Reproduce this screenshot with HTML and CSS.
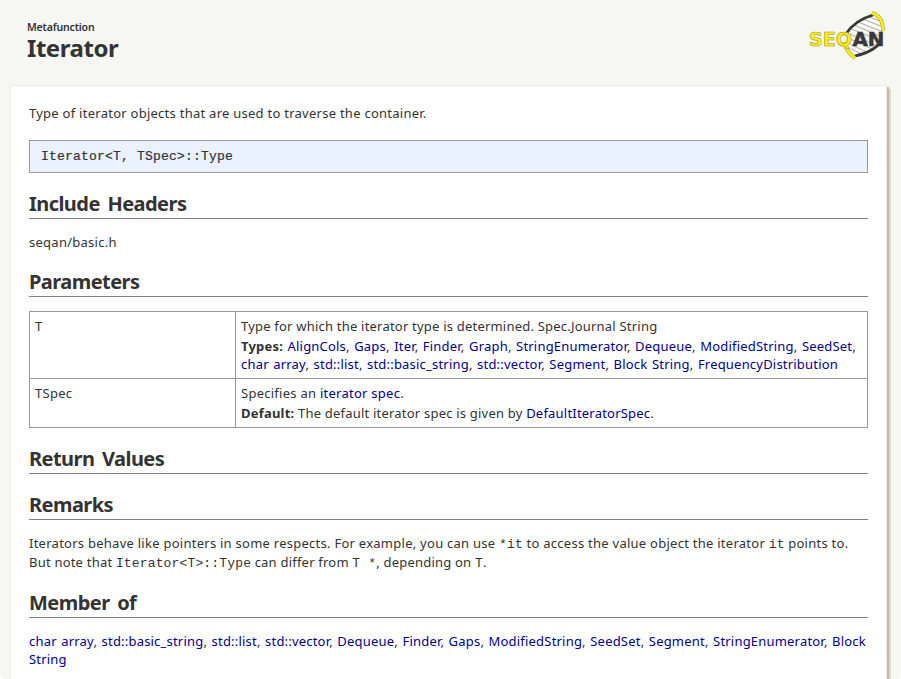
FILE: index.html
```html
<!DOCTYPE html>
<html lang="en">
<head>
<meta charset="utf-8">
<title>Metafunction Iterator</title>
<link rel="stylesheet" href="styles.css">
</head>
<body>
<div class="window">
<header class="page-header">
  <div>
    <div class="kind">Metafunction</div>
    <h1>Iterator</h1>
  </div>
  <svg class="logo" width="80" height="52" viewBox="0 0 80 52" role="img" aria-label="SeqAn">
    <path d="M39 27C43 15 52 8 66 6L75 20C75 31 67 40 46 45Z" fill="#f8f8f6"/>
    <path d="M61 7L75 12M55 9L75 17M50 12L75 22M46 15L74 27M43 19L74 31M42 24L70 36M42 29L66 40M42 34L60 43M43 39L54 44" stroke="#aaa" fill="none"/>
    <path d="M38 24C43 16 51 9 65 5" fill="none" stroke="#3b3639" stroke-width="2.800"/>
    <path d="M73 31C69 38 60 43 47 46" fill="none" stroke="#3b3639" stroke-width="2.800"/>
    <path d="M64 3C72 5 75 11 75 21" fill="none" stroke="#998f48" stroke-width="3.600"/>
    <path d="M64 3C72 5 75 11 75 21" fill="none" stroke="#fff200" stroke-width="2.800"/>
    <path d="M36 32C38 40 41 44 47 48" fill="none" stroke="#998f48" stroke-width="3.600"/>
    <path d="M36 32C38 40 41 44 47 48" fill="none" stroke="#fff200" stroke-width="2.800"/>
    <text class="logo-seq" x="1" y="35.500" textLength="43" lengthAdjust="spacingAndGlyphs">SEQ</text>
    <text class="logo-an" x="44.500" y="35.500" textLength="32" lengthAdjust="spacingAndGlyphs">AN</text>
  </svg>
</header>
<main class="card">
  <p class="intro">Type of iterator objects that are used to traverse the container.</p>
  <pre>Iterator&lt;T, TSpec&gt;::Type</pre>

  <h2>Include Headers</h2>
  <p>seqan/basic.h</p>

  <h2>Parameters</h2>
  <table>
    <tr>
      <td class="name">T</td>
      <td>
        <div class="prose">Type for which the iterator type is determined. Spec.Journal String</div>
        <div class="detail links"><b>Types:</b> <a>AlignCols</a>, <a>Gaps</a>, <a>Iter</a>, <a>Finder</a>, <a>Graph</a>, <a>StringEnumerator</a>, <a>Dequeue</a>, <a>ModifiedString</a>, <a>SeedSet</a>,<br><a>char array</a>, <a>std::list</a>, <a>std::basic_string</a>, <a>std::vector</a>, <a>Segment</a>, <a>Block String</a>, <a>FrequencyDistribution</a></div>
      </td>
    </tr>
    <tr>
      <td class="name">TSpec</td>
      <td>
        <div>Specifies an <a>iterator spec</a>.</div>
        <div class="detail prose"><b>Default:</b> The default iterator spec is given by <a>DefaultIteratorSpec</a>.</div>
      </td>
    </tr>
  </table>

  <h2>Return Values</h2>
  <h2>Remarks</h2>
  <p class="remarks">Iterators behave like pointers in some respects. For example, you can use <code>*it</code> to access the value object the iterator <code>it</code> points to.<br><span class="prose">But note that <code>Iterator&lt;T&gt;::Type</code> can differ from <code>T *</code>, depending on <code>T</code>.</span></p>

  <h2>Member of</h2>
  <p class="links"><a>char array</a>, <a>std::basic_string</a>, <a>std::list</a>, <a>std::vector</a>, <a>Dequeue</a>, <a>Finder</a>, <a>Gaps</a>, <a>ModifiedString</a>, <a>SeedSet</a>, <a>Segment</a>, <a>StringEnumerator</a>, <a>Block</a><br><a>String</a></p>
</main>
</div>
</body>
</html>
```
FILE: styles.css
```css
* { box-sizing: border-box; }
html { background: #fff; }
body {
  margin: 0;
  color: #333;
  font: 13px/18px "Noto Sans", sans-serif;
  letter-spacing: .26px;
}
.window {
  height: 679px;
  overflow: hidden;
  background: #f6f7f2;
  border-radius: 0 0 4px 4px;
}
.page-header {
  display: flex;
  justify-content: space-between;
  height: 85px;
  padding: 10px 13px 0 27px;
}
.kind {
  padding-top: 10px;
  font-size: 10.5px;
  line-height: 14px;
  font-weight: 600;
  letter-spacing: -.15px;
}
h1 {
  margin: 0;
  font-size: 24px;
  line-height: 28px;
  font-weight: 700;
  letter-spacing: -.45px;
}
.logo { display: block; }
.logo-seq, .logo-an {
  font-family: "DejaVu Sans", sans-serif;
  font-weight: 700;
  font-size: 20px;
  letter-spacing: 0;
}
.logo-seq { fill: #fff200; stroke: #998f48; stroke-width: .6px; }
.logo-an { fill: #3b3639; stroke: #3b3639; stroke-width: .5px; }
.card {
  width: 877px;
  height: 620px;
  margin-left: 10px;
  padding: 18px 18px 0;
  background: #fff;
  border: 1px solid #ebece8;
  box-shadow: 2px 2px 0 #c3b9a4, 4px 4px 0 #e0d9ca;
}
p { margin: 14px 0 0; white-space: nowrap; }
.intro { margin: 0; }
.prose { letter-spacing: .21px; }
.links { word-spacing: .9px; letter-spacing: .2px; }
pre {
  height: 33px;
  margin: 18px 0 0;
  padding: 0 11px;
  border: 1px solid #999;
  background: #ebf2ff;
  font: 13px/31px "Liberation Mono", monospace;
  letter-spacing: .2px;
  -webkit-text-stroke: .2px #333;
}
h2 {
  height: 27px;
  margin: 19px 0 0;
  border-bottom: 1px solid #808080;
  font-size: 20px;
  line-height: 24px;
  font-weight: 700;
  letter-spacing: -.55px;
  word-spacing: 3px;
}
table {
  width: 839px;
  margin-top: 14px;
  border-collapse: collapse;
  table-layout: fixed;
}
td {
  padding: 5px;
  border: 1px solid #999;
  vertical-align: top;
  white-space: nowrap;
}
.name { width: 206px; }
.detail { margin-top: 2px; }
a { color: #00008f; }
code {
  font: 13px/13px "Liberation Mono", monospace;
  letter-spacing: .15px;
}
.remarks { line-height: 19px; }
```
